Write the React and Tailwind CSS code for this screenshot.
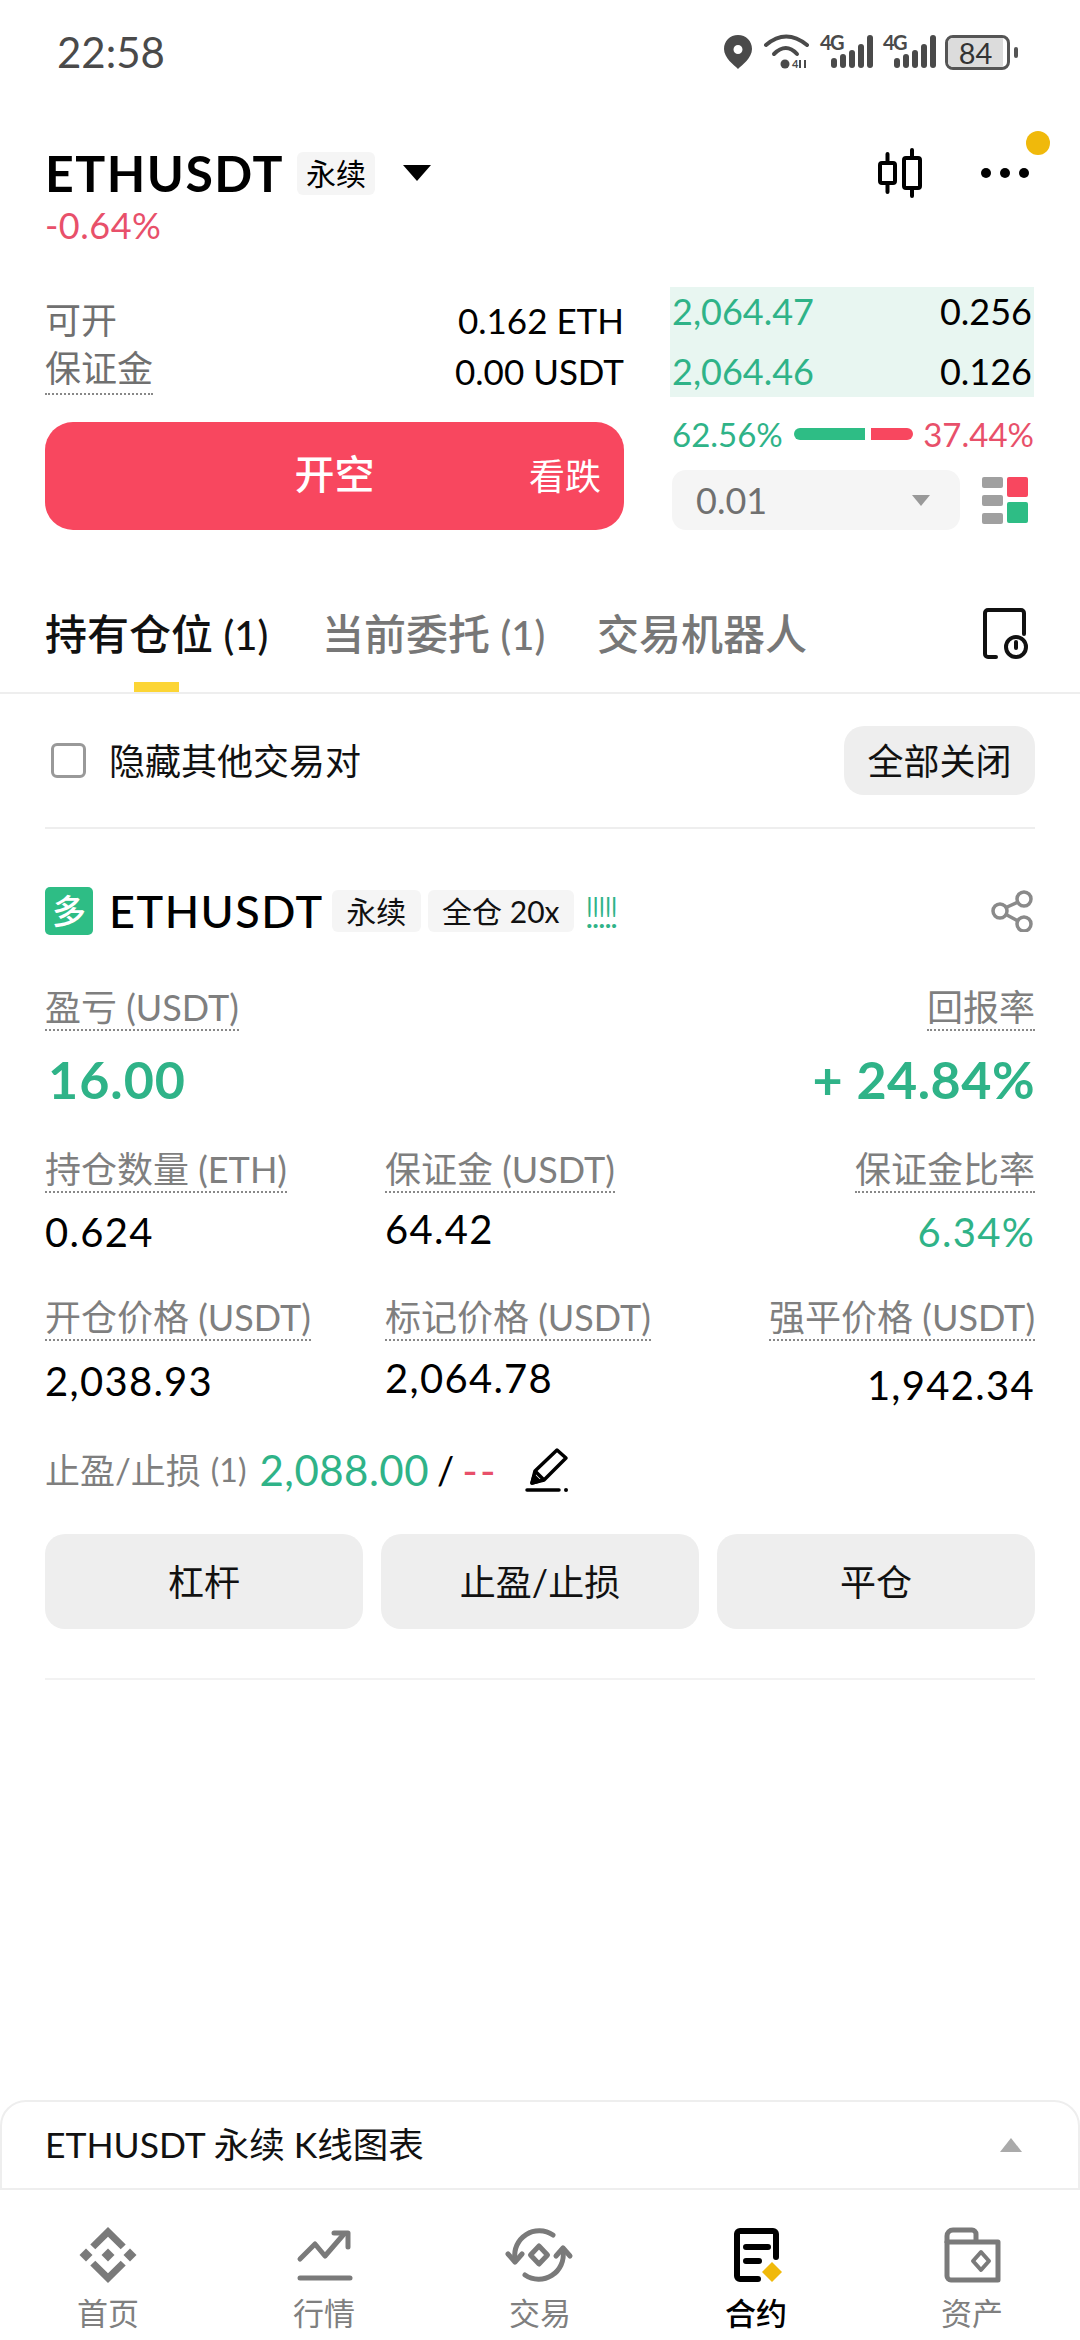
/**
 * Perpetual futures position screen
 */

const POSITION_STATS = [
  [
    { label: '持仓数量 (ETH)', value: '0.624', valueClass: 'mt-[19px] text-black' },
    { label: '保证金 (USDT)', value: '64.42', valueClass: 'mt-[16px] text-black' },
    { label: '保证金比率', value: '6.34%', right: true, valueClass: 'mt-[19px] text-[#2FB388]' },
  ],
  [
    { label: '开仓价格 (USDT)', value: '2,038.93', valueClass: 'mt-[20px] text-black' },
    { label: '标记价格 (USDT)', value: '2,064.78', valueClass: 'mt-[17px] text-black' },
    { label: '强平价格 (USDT)', value: '1,942.34', right: true, valueClass: 'mt-[24px] text-black' },
  ],
];

// =============================================================================
// ICONS
// =============================================================================

const PinIcon = () => (
  <svg width="28" height="34" viewBox="0 0 28 34">
    <path
      fillRule="evenodd"
      fill="#4a4a4a"
      d="M14 0C6 0 0 6 0 14c0 9 10 16 14 20 4-4 14-11 14-20C28 6 22 0 14 0Zm0 10a4.5 4.5 0 1 1 0 9 4.5 4.5 0 0 1 0-9Z"
    />
  </svg>
);

const WifiIcon = () => (
  <svg width="48" height="36" viewBox="0 0 48 36" fill="none" stroke="#4a4a4a" strokeWidth="4" strokeLinecap="round">
    <path d="M3 11Q23-6 44 11" />
    <path d="M11 20Q23 8 34 20" />
    <circle cx="22" cy="30" r="4.5" fill="#4a4a4a" stroke="none" />
    <text x="29" y="34" fontSize="11" fontWeight="700" fill="#4a4a4a" stroke="none">4</text>
    <path d="M37 26v8M42 26v8" strokeWidth="2" strokeLinecap="butt" />
  </svg>
);

const SignalIcon = () => (
  <svg width="50" height="36" viewBox="0 0 50 36" fill="#4a4a4a" className="overflow-visible">
    <text x="0" y="16" fontSize="20" fontWeight="700" letterSpacing="-1.5">4G</text>
    <rect x="11" y="24" width="6" height="10" rx="3" />
    <rect x="20" y="20" width="6" height="14" rx="3" />
    <rect x="29" y="16" width="6" height="18" rx="3" />
    <rect x="38" y="10" width="6" height="24" rx="3" />
    <rect x="47" y="1" width="6" height="33" rx="3" />
  </svg>
);

const CandleIcon = () => (
  <svg width="46" height="50" viewBox="0 0 46 50" fill="none" stroke="#000" strokeWidth="4" strokeLinecap="round">
    <rect x="3" y="15" width="15" height="20" rx="2" />
    <path d="M10.5 6v9M10.5 35v9" />
    <rect x="27" y="10" width="16" height="30" rx="2" />
    <path d="M35 2v8M35 40v8" />
  </svg>
);

const HistoryIcon = () => (
  <svg width="48" height="52" viewBox="0 0 48 52" fill="none" stroke="#111" strokeWidth="4" strokeLinecap="round">
    <path d="M14 49H6a3 3 0 0 1-3-3V5a3 3 0 0 1 3-3h33a3 3 0 0 1 3 3v21" />
    <circle cx="34" cy="39" r="10" />
    <path d="M34 34v6" />
  </svg>
);

const ShareIcon = () => (
  <svg width="44" height="42" viewBox="0 0 44 42" fill="none" stroke="#8a8a8a" strokeWidth="3.5">
    <circle cx="33" cy="9" r="7" />
    <circle cx="9" cy="21" r="7" />
    <circle cx="33" cy="34" r="7" />
    <path d="M15 17.500 27 12M15 24.500 27 31" />
  </svg>
);

const PencilIcon = () => (
  <svg width="48" height="46" viewBox="0 0 48 46" fill="none" stroke="#000" strokeWidth="3.500" strokeLinejoin="round">
    <path d="M10 36l3-12L35 3l9 8-22 22Z" />
    <path d="M13 24l9 9" />
    <path d="M10 36l2-7 5 5Z" fill="#000" />
    <path d="M5 43h32" strokeLinecap="round" />
    <circle cx="44" cy="43" r="2" fill="#000" stroke="none" />
  </svg>
);

const HomeIcon = () => (
  <svg width="60" height="60" viewBox="-30 -30 60 60" fill="#7a7a7a">
    <path d="M0-28 17.700-10.500 12.700-5.700 0-18.300-12.700-5.700-17.700-10.500Z" />
    <path d="M0 28 17.700 10.500 12.700 5.700 0 18.300-12.700 5.700-17.700 10.500Z" />
    <path d="M0-6.500 6.500 0 0 6.500-6.500 0Z" />
    <path d="M-22-6.500-15.500 0-22 6.500-28.500 0Z" />
    <path d="M22-6.500 28.500 0 22 6.500 15.500 0Z" />
  </svg>
);

const MarketIcon = () => (
  <svg width="60" height="60" viewBox="0 0 60 60" fill="none" stroke="#7a7a7a" strokeWidth="5" strokeLinecap="round" strokeLinejoin="round">
    <path d="M6 34 21 19l10 12L50 9" />
    <path d="M40 8h14v14" />
    <path d="M6 53h50" />
  </svg>
);

const TradeIcon = () => (
  <svg width="60" height="60" viewBox="0 0 60 60" fill="none" stroke="#7a7a7a" strokeWidth="5" strokeLinecap="round" strokeLinejoin="round" className="overflow-visible">
    <path d="M43 10A24.500 24.500 0 0 0 5 34" />
    <path d="M-2 29l7 8 7-8" />
    <path d="M15 50A24.500 24.500 0 0 0 53 26" />
    <path d="M46 31l7-8 7 8" />
    <path d="M29 21l8.500 9-8.500 9-8.500-9Z" />
  </svg>
);

const FuturesIcon = () => (
  <svg width="60" height="60" viewBox="0 0 60 60" fill="none" stroke="#000" strokeWidth="6" strokeLinecap="round">
    <path d="M32 54H14a3 3 0 0 1-3-3V9a3 3 0 0 1 3-3h33a3 3 0 0 1 3 3v23" />
    <path d="M20 22h22M20 36h13" />
    <path d="M46 37l10 10-10 10-10-10Z" fill="#F0B90B" stroke="none" />
  </svg>
);

const WalletIcon = () => (
  <svg width="60" height="60" viewBox="0 0 60 60" fill="none" stroke="#7a7a7a" strokeWidth="5" strokeLinejoin="round">
    <path d="M5 18V11a6 6 0 0 1 6-6h19a4 4 0 0 1 4 4v9" />
    <path d="M5 17h51v38H9a4 4 0 0 1-4-4Z" />
    <path d="M39 27l8 9-8 9-8-9Z" strokeWidth="4" />
  </svg>
);

// =============================================================================
// SUB-COMPONENTS
// =============================================================================

const StatusBar = () => (
  <div className="h-[104px] shrink-0 flex items-center justify-between pl-[57px] pr-[62px] text-[#4a4a4a]">
    <span className="text-[42px] leading-none">22:58</span>
    <div className="flex items-center">
      <PinIcon />
      <div className="ml-[11px]"><WifiIcon /></div>
      <div className="ml-[9px]"><SignalIcon /></div>
      <div className="ml-[13px]"><SignalIcon /></div>
      <div className="ml-[12px] w-[65px] h-[35px] rounded-[8px] border-[3px] border-[#555] flex">
        <div className="w-[55px] h-full rounded-l-[5px] bg-[#dcdcdc] flex items-center justify-center text-[29px] leading-[29px] text-[#333]">84</div>
      </div>
      <div className="ml-[4px] w-[4px] h-[11px] rounded-full bg-[#555]" />
    </div>
  </div>
);

const Header = () => (
  <div className="relative shrink-0 px-[45px] pt-[33px]">
    <div className="h-[72px] flex items-center">
      <span className="text-[50px] leading-none font-bold tracking-[1.5px] text-black">ETHUSDT</span>
      <span className="ml-[13px] w-[78px] h-[43px] rounded-[6px] bg-[#f5f5f5] flex items-center justify-center text-[30px] leading-none text-black">永续</span>
      <div className="ml-[28px] w-0 h-0 border-x-[14px] border-x-transparent border-t-[16px] border-t-black" />
      <div className="ml-auto mr-[112px]"><CandleIcon /></div>
    </div>
    <div className="absolute left-[981px] top-[64px] flex gap-[9px]">
      <span className="w-[10px] h-[10px] rounded-full bg-black" />
      <span className="w-[10px] h-[10px] rounded-full bg-black" />
      <span className="w-[10px] h-[10px] rounded-full bg-black" />
    </div>
    <span className="absolute left-[1026px] top-[27px] w-[24px] h-[24px] rounded-full bg-[#F0B90B]" />
    <div className="h-[34px] -mt-[1px] text-[36px] leading-[34px] tracking-[0.5px] text-[#E8506A]">-0.64%</div>
  </div>
);

const OrderPanel = () => (
  <div className="shrink-0 mt-[45px] pl-[45px] pr-[46px] flex justify-between">
    <div className="w-[579px]">
      <div className="pt-[13px] h-[53px] flex justify-between items-center">
        <span className="text-[36px] leading-none text-[#707070]">可开</span>
        <span className="text-[35px] leading-none text-black">0.162 ETH</span>
      </div>
      <div className="h-[57px] flex justify-between items-start">
        <span className="pt-[11px] pb-[8px] text-[36px] leading-[34px] text-[#707070] border-b-2 border-dotted border-[#888]">保证金</span>
        <span className="pt-[14px] text-[35px] leading-[35px] text-black">0.00 USDT</span>
      </div>
      <button className="mt-[25px] w-full h-[108px] rounded-[28px] bg-[#F8475F] relative flex items-center justify-center text-white">
        <span className="text-[40px] leading-none font-medium -mt-[4px]">开空</span>
        <span className="absolute right-[23px] text-[36px] leading-none">看跌</span>
      </button>
    </div>
    <div className="w-[364px]">
      <div className="h-[110px] bg-[#E8F6F1] pt-[4px] pr-[2px] pl-[2px] flex flex-col gap-[20px]">
        <div className="h-[40px] flex justify-between items-center text-[36px] leading-none">
          <span className="text-[#2FB388]">2,064.47</span>
          <span className="text-black">0.256</span>
        </div>
        <div className="h-[40px] flex justify-between items-center text-[36px] leading-none">
          <span className="text-[#2FB388]">2,064.46</span>
          <span className="text-black">0.126</span>
        </div>
      </div>
      <div className="mt-[17px] h-[40px] pl-[2px] flex items-center text-[33px] leading-none">
        <span className="text-[#2FB388]">62.56%</span>
        <div className="ml-auto w-[71px] h-[12px] rounded-l-full bg-[#2EBD85]" />
        <div className="ml-[6px] w-[42px] h-[12px] rounded-r-full bg-[#F8475F]" />
        <span className="ml-auto text-[#E8506A]">37.44%</span>
      </div>
      <div className="mt-[16px] flex items-center">
        <div className="ml-[2px] w-[288px] h-[60px] rounded-[14px] bg-[#f5f5f5] flex items-center justify-between pl-[24px] pr-[30px]">
          <span className="text-[36px] leading-none text-[#707070]">0.01</span>
          <div className="w-0 h-0 border-x-[9px] border-x-transparent border-t-[11px] border-t-[#999]" />
        </div>
        <div className="ml-[22px] flex gap-[4px]">
          <div className="flex flex-col gap-[7px]">
            <div className="w-[21px] h-[11px] rounded-[2px] bg-[#a0a0a0]" />
            <div className="w-[21px] h-[11px] rounded-[2px] bg-[#a0a0a0]" />
            <div className="w-[21px] h-[11px] rounded-[2px] bg-[#a0a0a0]" />
          </div>
          <div className="flex flex-col gap-[5px]">
            <div className="w-[21px] h-[20px] rounded-[2px] bg-[#F8475F]" />
            <div className="w-[21px] h-[21px] rounded-[2px] bg-[#2EBD85]" />
          </div>
        </div>
      </div>
    </div>
  </div>
);

const Tabs = () => (
  <div className="relative shrink-0 h-[164px] pt-[64px] pl-[45px] pr-[50px] border-b-2 border-[#eeeeee]">
    <div className="h-[80px] flex items-center text-[42px] leading-none">
      <span className="w-[277px] font-medium text-[#111]">持有仓位 <span className="text-[40px]">(1)</span></span>
      <span className="w-[275px] font-medium text-[#777]">当前委托 <span className="text-[40px]">(1)</span></span>
      <span className="font-medium text-[#777]">交易机器人</span>
      <div className="ml-auto"><HistoryIcon /></div>
    </div>
    <div className="absolute left-[134px] bottom-0 w-[45px] h-[10px] bg-[#FCD535]" />
  </div>
);

const FilterRow = () => (
  <div className="shrink-0 mx-[45px] h-[135px] flex items-center justify-between border-b-2 border-[#eeeeee]">
    <label className="flex items-center pl-[6px]">
      <span className="w-[35px] h-[35px] rounded-[6px] border-[3px] border-[#999] bg-white" />
      <span className="ml-[23px] text-[36px] leading-none text-[#111]">隐藏其他交易对</span>
    </label>
    <button className="w-[191px] h-[69px] rounded-[20px] bg-[#eeeeee] text-[36px] leading-none text-[#111]">全部关闭</button>
  </div>
);

const DottedLabel = ({ children, className = '' }) => (
  <span className={`inline-block text-[36px] leading-[38px] text-[#7f7f7f] border-b-2 border-dotted border-[#888] pb-[3px] ${className}`}>
    {children}
  </span>
);

const StatRow = ({ items, className = '' }) => (
  <div className={`grid grid-cols-[340px_340px_1fr] ${className}`}>
    {items.map((item) => (
      <div key={item.label} className={item.right ? 'text-right' : ''}>
        <DottedLabel>{item.label}</DottedLabel>
        <div className={`text-[40px] leading-[40px] tracking-[1.3px] ${item.valueClass}`}>{item.value}</div>
      </div>
    ))}
  </div>
);

const PositionCard = () => (
  <div className="shrink-0 px-[45px] pt-[58px]">
    {/* Title */}
    <div className="h-[48px] flex items-center">
      <span className="w-[48px] h-[48px] rounded-[5px] bg-[#2EBD85] flex items-center justify-center text-[34px] leading-none font-medium text-white">多</span>
      <span className="ml-[16px] text-[45px] leading-none font-medium tracking-[1.5px] text-black">ETHUSDT</span>
      <span className="ml-[8px] w-[89px] h-[42px] rounded-[6px] bg-[#f5f5f5] flex items-center justify-center text-[30px] leading-none text-[#111]">永续</span>
      <span className="ml-[7px] w-[146px] h-[42px] rounded-[6px] bg-[#f5f5f5] flex items-center justify-center text-[30px] leading-none text-[#111]">全仓 20x</span>
      <span className="ml-[10px] text-[44px] leading-none font-light tracking-[-5px] text-[#2FB388]">!!!!!</span>
      <div className="ml-auto"><ShareIcon /></div>
    </div>

    {/* PnL */}
    <div className="mt-[53px] flex justify-between">
      <div>
        <DottedLabel>盈亏 (USDT)</DottedLabel>
        <div className="mt-[24px] pl-[3px] text-[52px] leading-[48px] font-bold tracking-[1px] text-[#2FB388]">16.00</div>
      </div>
      <div className="text-right">
        <DottedLabel>回报率</DottedLabel>
        <div className="mt-[24px] text-[52px] leading-[48px] font-bold tracking-[0.5px] text-[#2FB388]">+ 24.84%</div>
      </div>
    </div>

    <StatRow items={POSITION_STATS[0]} className="mt-[47px]" />
    <StatRow items={POSITION_STATS[1]} className="mt-[46px]" />

    {/* TP / SL */}
    <div className="mt-[42px] h-[46px] flex items-center">
      <span className="text-[35px] leading-none text-[#7f7f7f]">止盈/止损</span>
      <span className="ml-[10px] text-[32px] leading-none text-[#7f7f7f]">(1)</span>
      <span className="ml-[13px] text-[42px] leading-none tracking-[0.5px] text-[#2FB388]">2,088.00</span>
      <span className="ml-[8px] text-[38px] leading-none text-black">/</span>
      <span className="ml-[8px] text-[42px] leading-none tracking-[2px] text-[#E8506A]">--</span>
      <div className="ml-[24px]"><PencilIcon /></div>
    </div>

    {/* Actions */}
    <div className="mt-[41px] flex gap-[18px]">
      {['杠杆', '止盈/止损', '平仓'].map((label) => (
        <button key={label} className="flex-1 h-[95px] rounded-[20px] bg-[#eeeeee] text-[36px] leading-none text-[#111]">
          {label}
        </button>
      ))}
    </div>
    <div className="mt-[49px] h-[2px] bg-[#f2f2f2]" />
  </div>
);

const ChartSheet = () => (
  <div className="shrink-0 mt-auto h-[90px] rounded-t-[26px] border-x-2 border-t-2 border-b-2 border-[#eeeeee] pl-[43px] pr-[56px] flex items-center justify-between">
    <span className="text-[35.500px] leading-none text-[#111]">ETHUSDT 永续 K线图表</span>
    <div className="w-0 h-0 border-x-[11px] border-x-transparent border-b-[14px] border-b-[#aaaaaa]" />
  </div>
);

const NAV_ITEMS = [
  { label: '首页', Icon: HomeIcon },
  { label: '行情', Icon: MarketIcon },
  { label: '交易', Icon: TradeIcon },
  { label: '合约', Icon: FuturesIcon, active: true },
  { label: '资产', Icon: WalletIcon },
];

const BottomNav = () => (
  <div className="shrink-0 h-[150px] pt-[35px] grid grid-cols-5">
    {NAV_ITEMS.map(({ label, Icon, active }) => (
      <div key={label} className="flex flex-col items-center">
        <Icon />
        <span className={`mt-[13px] text-[31px] leading-none ${active ? 'text-black font-medium' : 'text-[#7f7f7f]'}`}>{label}</span>
      </div>
    ))}
  </div>
);

// =============================================================================
// MAIN COMPONENT
// =============================================================================

export default function App() {
  return (
    <div className="w-[1080px] h-[2340px] overflow-hidden bg-white flex flex-col font-['Lato','Noto_Sans_CJK_SC',sans-serif]">
      <StatusBar />
      <Header />
      <OrderPanel />
      <Tabs />
      <FilterRow />
      <PositionCard />
      <ChartSheet />
      <BottomNav />
    </div>
  );
}
